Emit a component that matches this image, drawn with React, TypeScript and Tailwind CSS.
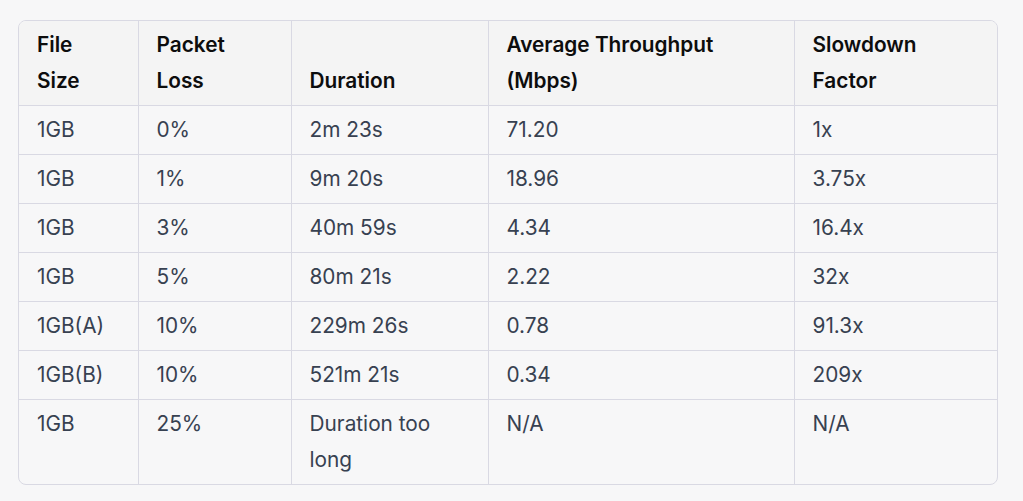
import React from "react";

const rows: string[][] = [
  ["1GB", "0%", "2m 23s", "71.20", "1x"],
  ["1GB", "1%", "9m 20s", "18.96", "3.75x"],
  ["1GB", "3%", "40m 59s", "4.34", "16.4x"],
  ["1GB", "5%", "80m 21s", "2.22", "32x"],
  ["1GB(A)", "10%", "229m 26s", "0.78", "91.3x"],
  ["1GB(B)", "10%", "521m 21s", "0.34", "209x"],
  ["1GB", "25%", "Duration too long", "N/A", "N/A"],
];

const headers = ["File Size", "Packet Loss", "Duration", "Average Throughput (Mbps)", "Slowdown Factor"];

export default function App() {
  return (
    <div
      className="min-h-[501px] w-[1023px] bg-[#f7f7f8] pt-[20px] pl-[18px]"
      style={{ fontFamily: "Inter, 'Noto Sans', sans-serif" }}
    >
      <div className="w-[980px] overflow-hidden rounded-lg border border-[#d9d9e3]">
        <table className="w-full table-fixed border-collapse text-[20.8px] leading-[36px]">
          <colgroup>
            <col className="w-[119px]" />
            <col className="w-[153px]" />
            <col className="w-[197px]" />
            <col className="w-[306px]" />
            <col />
          </colgroup>
          <thead>
            <tr className="bg-[#f4f4f4]">
              {headers.map((h, i) => (
                <th
                  key={i}
                  className={`px-[18px] py-[6px] text-left align-bottom font-semibold text-[#0d0d0d] ${i > 0 ? "border-l border-[#d9d9e3]" : ""}`}
                >
                  {h}
                </th>
              ))}
            </tr>
          </thead>
          <tbody>
            {rows.map((r, ri) => (
              <tr key={ri} className="border-t border-[#d9d9e3]">
                {r.map((c, ci) => (
                  <td
                    key={ci}
                    className={`px-[18px] py-[6px] align-top text-[#374151] ${ci > 0 ? "border-l border-[#d9d9e3]" : ""}`}
                  >
                    {c}
                  </td>
                ))}
              </tr>
            ))}
          </tbody>
        </table>
      </div>
    </div>
  );
}
